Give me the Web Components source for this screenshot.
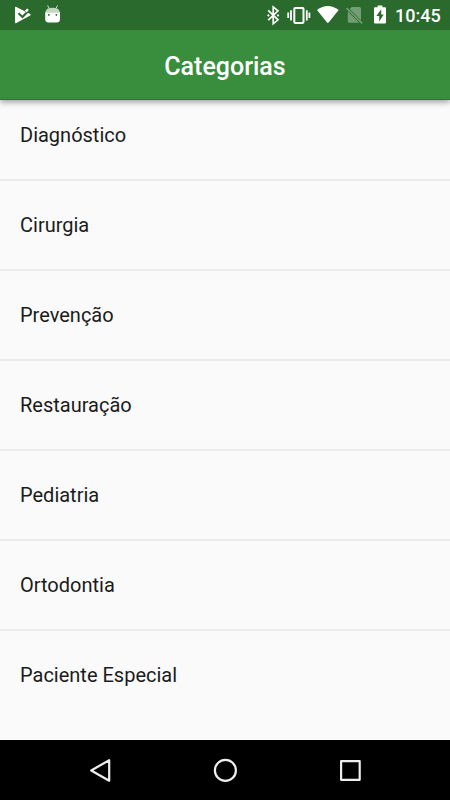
<!DOCTYPE html>
<html lang="pt">
<head>
<meta charset="utf-8">
<title>Categorias</title>
<style>
html,body{margin:0;height:100%;background:#fafafa;font-family:Roboto,sans-serif}
</style>
</head>
<body>
<category-screen></category-screen>
<script>
const define = (name, html) => customElements.define(name, class extends HTMLElement {
  constructor() {
    super();
    this.attachShadow({ mode: 'open' }).innerHTML = html;
  }
});

define('status-bar', `<style>
:host{display:flex;justify-content:space-between;height:30px;background:#2a6a2d;color:#fff;box-sizing:border-box;padding:0 10px 0 13px;flex:none;position:relative;z-index:2}
div{display:flex;align-items:center}
svg{display:block;flex:none;fill:#fff}
span{font:500 18px/30px Roboto,sans-serif;width:45px;white-space:nowrap;padding-top:1px}
</style>
<div>
<svg width="52" height="30" viewBox="13 0 52 30">
<path d="M15 7.6Q15 6.3 16.3 7L30.2 14.1Q31.3 14.9 30.2 15.6L16.3 23Q15 23.6 15 22.3Z"/>
<path d="M18.5 13.2l4 3.8 7-7.2" fill="none" stroke="#2a6a2d" stroke-width="2"/>
<path d="M25 10.6l2.2-2.2 1.6 1.6-2.3 2.4z"/>
<path d="M45.4 12.2Q45.9 7.8 52.6 7.8T59.8 12.2z" opacity=".72"/>
<path d="M49 8l-1.4-2.6M56.2 8l1.4-2.6" stroke="#fff" stroke-width="1" opacity=".8"/>
<path fill-rule="evenodd" d="M45.2 12.2H60V19Q60 22.5 56.5 22.5H48.7Q45.2 22.5 45.2 19ZM48.8 14a.9.9 0 1 0 .01 0ZM56.4 14a.9.9 0 1 0 .01 0Z"/>
</svg></div>
<div>
<svg width="130" height="30" viewBox="265 0 130 30">
<path d="M268.2 10.4L278 19.8 273.2 23.8V7L278 10.8 268.2 20.1" fill="none" stroke="#fff" stroke-width="1.7"/>
<path d="M268.4 14.1l1.3 1.3-1.3 1.3-1.3-1.3zM278 14.1l1.3 1.3-1.3 1.3-1.3-1.3z"/>
<rect x="294.3" y="7.9" width="9.2" height="15" rx=".8" fill="none" stroke="#fff" stroke-width="2"/>
<path d="M291 10.2v10.4M306.8 10.2v10.4M288.2 12.6v5.4M309.4 12.6v5.4" stroke="#fff" stroke-width="1.8"/>
<path d="M317 10Q327.7 2.1 338.7 10L328.6 22.6Q327.8 23.4 327 22.6Z"/>
<g opacity=".34"><path d="M351.5 7H359.5Q361 7 361 8.5V20.2L349.8 9ZM347.8 11.6L359.2 22.8H349.3Q347.8 22.8 347.8 21.2Z"/><path d="M346.6 8.2l15.6 15.1" stroke="#fff" stroke-width="1.7"/></g>
<path fill-rule="evenodd" d="M377.6 5.5h4.8V7.2H385Q386 7.2 386 8.2V22.5Q386 23.5 385 23.5H375Q374 23.5 374 22.5V8.2Q374 7.2 375 7.2H377.6ZM381.2 9.3L376.4 16.1H379.2V21.4L383.7 14.5H381.2Z"/>
</svg>
<span>10:45</span></div>`);

define('app-bar', `<style>
:host{display:flex;align-items:center;justify-content:center;height:70px;box-sizing:border-box;background:#388e3c;border-bottom:1px solid #1d8022;color:#fff;font:500 25px/30px Roboto,sans-serif;padding-top:5px;flex:none;position:relative;z-index:1;box-shadow:0 2px 6px rgba(0,0,0,.4)}
</style><slot></slot>`);

define('category-row', `<style>
:host{display:flex;align-items:center;height:90px;box-sizing:border-box;padding:0 20px;border-bottom:2px solid #ebebeb;color:#1b1b1b;font:400 20px/24px Roboto,sans-serif;flex:none}
:host(:last-of-type){border-bottom-color:transparent}
</style><slot></slot>`);

define('category-list', `<style>
:host{display:flex;flex-direction:column;flex:1;min-height:0;overflow:hidden;background:#fafafa}
div{margin-top:-9px}
</style><div><slot></slot></div>`);

define('nav-bar', `<style>
:host{display:grid;grid-template-columns:repeat(3,125px);justify-content:center;justify-items:center;align-items:center;height:60px;background:#000;flex:none}
svg{display:block;fill:none;stroke:#eee;stroke-width:2.2;stroke-linejoin:round}
</style>
<svg width="30" height="30"><path d="M6.2 15.5L24.2 5.2V25.8Z"/></svg>
<svg width="30" height="30"><circle cx="15.4" cy="15.4" r="10.5"/></svg>
<svg width="30" height="30"><rect x="6.1" y="6.2" width="18.6" height="18.6"/></svg>`);

define('category-screen', `<style>
:host{display:flex;flex-direction:column;width:450px;height:800px;overflow:hidden}
</style>
<status-bar></status-bar>
<app-bar>Categorias</app-bar>
<category-list>
<category-row>Diagnóstico</category-row>
<category-row>Cirurgia</category-row>
<category-row>Prevenção</category-row>
<category-row>Restauração</category-row>
<category-row>Pediatria</category-row>
<category-row>Ortodontia</category-row>
<category-row>Paciente Especial</category-row>
</category-list>
<nav-bar></nav-bar>`);
</script>
</body>
</html>
